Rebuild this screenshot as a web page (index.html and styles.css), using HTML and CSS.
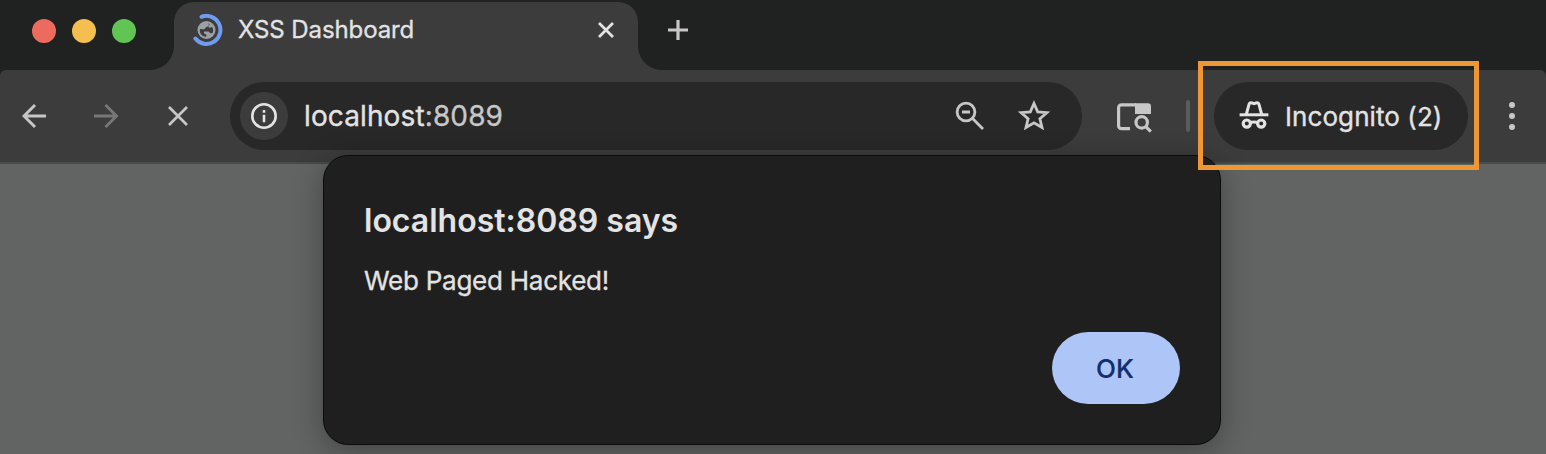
FILE: index.html
```html
<!DOCTYPE html>
<html lang="en">
<head>
<meta charset="utf-8">
<title>XSS Dashboard</title>
<link rel="stylesheet" href="styles.css">
</head>
<body>
<div class="window">
  <header class="tabstrip">
    <div class="lights"><i class="light red"></i><i class="light yellow"></i><i class="light green"></i></div>
    <div class="tab">
      <svg class="favicon" width="32" height="32" viewBox="0 0 32 32" fill="none">
        <path d="M10.5 2.8A14 14 0 1 1 4.4 24.5" stroke="#6f9cf0" stroke-width="4" stroke-linecap="round"/>
        <circle cx="15.5" cy="16" r="9" fill="#9aa0a3"/>
        <path d="M17 9.3c1.7 1.6.8 3.4-1.5 3.7-1.4.2-1 2.2-2.8 2.2L8.9 15c-.6 5 2.6 8 6.5 7.6l-.1-2.1c-2.2-.4-2.8-1.4-2.3-3h4c1.2 0 1.5 1.7 2.6 1.8l2-.3c.9-2.2.7-4.4-.5-6.3-1.3 1.5-3 1.5-3.5.2-.3-1.4 1.6-1.8.9-2.9z" fill="#3c3c3c"/>
      </svg>
      <span class="tab-title">XSS Dashboard</span>
      <svg class="tab-close" width="18" height="18" viewBox="0 0 18 18" fill="none" stroke="#e3e3e3" stroke-width="2.8"><path d="M2 2l14 14M16 2L2 16"/></svg>
    </div>
    <svg class="new-tab" width="20" height="20" viewBox="0 0 20 20" fill="none" stroke="#c7c7c7" stroke-width="3.2"><path d="M10 0v20M0 10h20"/></svg>
  </header>
  <nav class="toolbar">
    <svg class="back" width="26" height="26" viewBox="0 0 26 26" fill="none" stroke="#c7c7c7" stroke-width="2.9"><path d="M24 13H2.5M13 2L2 13l11 11"/></svg>
    <svg class="forward" width="26" height="26" viewBox="0 0 26 26" fill="none" stroke="#777" stroke-width="2.9"><path d="M1 13h22M12.5 2l11 11-11 11"/></svg>
    <svg class="stop" width="22" height="22" viewBox="0 0 22 22" fill="none" stroke="#c7c7c7" stroke-width="2.7"><path d="M2 2l18 18M20 2L2 20"/></svg>
    <div class="omnibox">
      <span class="site-info">
        <svg width="26" height="26" viewBox="0 0 26 26" fill="none" stroke="#e3e3e3" stroke-width="2.6"><circle cx="13" cy="13" r="11.7"/><path d="M13 11.8v7.4M13 7v2.7"/></svg>
      </span>
      <span class="url">localhost<span class="port">:8089</span></span>
      <svg class="zoom-out" width="30" height="30" viewBox="0 0 30 30" fill="none" stroke="#c7c7c7" stroke-width="2.8"><circle cx="11" cy="11" r="8.9"/><path d="M7 11h8M17.3 17.3L28 28"/></svg>
      <svg class="star" width="32" height="30" viewBox="0 0 32 30" fill="none" stroke="#c7c7c7" stroke-width="2.8"><path d="M16 3.5l3.7 8.4 9.1.8-6.9 6 2.1 8.8-8-4.7-8 4.7 2.1-8.8-6.9-6 9.1-.8z"/></svg>
    </div>
    <svg class="side-search" width="36" height="32" viewBox="0 0 36 32" fill="none" stroke="#c7c7c7" stroke-width="3.2"><path d="M14 26.6H5.4A2.8 2.8 0 0 1 2.6 23.8V5.6A2.8 2.8 0 0 1 5.4 2.8H20"/><path d="M19 1.2h13a3 3 0 0 1 3 3V12H19z" fill="#c7c7c7" stroke="none"/><circle cx="25.7" cy="20.4" r="5.7"/><path d="M29.8 24.6l5 5"/></svg>
    <i class="divider"></i>
    <div class="incognito">
      <svg class="spy" width="30" height="28" viewBox="0 0 30 28" fill="none" stroke="#e3e3e3"><path d="M.6 13.8h28.8" stroke-width="3"/><path d="M7.3 13.5L9.9 3.8c.4-1.6 1.2-2.4 2.4-2l2.7.8 2.7-.8c1.2-.4 2 .4 2.4 2L22.7 13.5" stroke-width="3"/><circle cx="7.8" cy="22.6" r="3.6" stroke-width="3.2"/><circle cx="22.2" cy="22.6" r="3.6" stroke-width="3.2"/><path d="M11 21.8c2-1.1 6-1.1 8 0" stroke-width="2.8"/></svg>
      <span class="incognito-label">Incognito (2)</span>
    </div>
    <div class="menu"><i></i><i></i><i></i></div>
  </nav>
  <main class="page"></main>
  <section class="dialog">
    <h1 class="dialog-title">localhost:8089 says</h1>
    <p class="dialog-message">Web Paged Hacked!</p>
    <button class="ok">OK</button>
  </section>
  <div class="highlight"></div>
</div>
</body>
</html>
```

FILE: styles.css
```css
* { box-sizing: border-box; }
body { margin: 0; background: #202221; font-family: Inter, "Liberation Sans", sans-serif; color: #e3e3e3; }
svg { display: block; flex: none; }
.window { position: relative; width: 1546px; height: 454px; overflow: hidden; display: flex; flex-direction: column; }

.tabstrip { height: 70px; flex: none; display: flex; align-items: flex-end; background: #202221; }
.lights { width: 174px; height: 70px; display: flex; gap: 16px; padding: 19px 0 0 32px; }
.light { width: 24px; height: 24px; border-radius: 50%; }
.red { background: #ed6a5f; }
.yellow { background: #f5bf4f; }
.green { background: #61c554; }
.tab { position: relative; width: 464px; height: 68px; padding: 0 23px 12px 17px; display: flex; align-items: center; background: #3c3c3c; border-radius: 20px 20px 0 0; }
.tab::before, .tab::after { content: ""; position: absolute; bottom: 0; width: 24px; height: 24px; }
.tab::before { left: -24px; background: radial-gradient(circle at 0 0, transparent 23.5px, #3c3c3c 24.5px); }
.tab::after { right: -24px; background: radial-gradient(circle at 100% 0, transparent 23.5px, #3c3c3c 24.5px); }
.tab-title { margin-left: 15px; font-size: 24px; line-height: 32px; letter-spacing: -.1px; -webkit-text-stroke: .3px; white-space: nowrap; }
.tab-close { margin-left: auto; }
.new-tab { margin: 0 0 30px 30px; }

.toolbar { height: 94px; flex: none; display: flex; align-items: center; padding-left: 22px; background: #3c3c3c; border-bottom: 2px solid #484949; border-radius: 6px 6px 0 0; }
.forward { margin-left: 45px; }
.stop { margin-left: 48px; }
.omnibox { width: 852px; height: 68px; margin-left: 41px; padding: 0 32px 0 10px; border-radius: 34px; background: #282828; display: flex; align-items: center; }
.site-info { width: 48px; height: 48px; border-radius: 50%; background: #3c3c3c; display: flex; align-items: center; justify-content: center; }
.url { margin-left: 16px; font-size: 28px; line-height: 36px; letter-spacing: .12px; -webkit-text-stroke: .35px; white-space: nowrap; }
.port { color: #c7c7c7; }
.zoom-out { margin-left: auto; }
.star { margin: 0 0 2px 33px; }
.side-search { margin: 3px 0 0 34px; }
.divider { width: 4px; height: 32px; margin-left: 34px; border-radius: 2px; background: #5c5c5c; }
.incognito { width: 254px; height: 68px; margin-left: 24px; padding-left: 25px; border-radius: 34px; background: #282828; display: flex; align-items: center; }
.spy { margin-bottom: 2px; }
.incognito-label { margin: 2px 0 0 16px; font-size: 26px; line-height: 34px; letter-spacing: .08px; -webkit-text-stroke: .35px; white-space: nowrap; }
.menu { margin-left: 41px; display: flex; flex-direction: column; gap: 5px; }
.menu i { width: 6px; height: 6px; border-radius: 50%; background: #c7c7c7; }

.page { flex: 1; background: #626463; }
.dialog { position: absolute; left: 323px; top: 155px; width: 898px; height: 290px; padding: 45px 40px 40px 40px; border: 1px solid #0b0b0b; border-radius: 25px; background: #1f1f1f; box-shadow: 0 6px 30px rgba(0, 0, 0, .32); display: flex; flex-direction: column; }
.dialog-title { margin: 0; font-size: 32px; line-height: 40px; font-weight: 600; white-space: nowrap; align-self: flex-start; }
.dialog-message { margin: 22px 0 0; font-size: 26px; line-height: 36px; letter-spacing: -.25px; -webkit-text-stroke: .3px; white-space: nowrap; align-self: flex-start; }
.ok { width: 128px; height: 72px; margin-top: auto; align-self: flex-end; padding: 2px 2px 0 0; border: 0; border-radius: 36px; background: #adc5f7; color: #122e6e; font: 500 26px/34px Inter, "Liberation Sans", sans-serif; -webkit-text-stroke: .2px; }
.highlight { position: absolute; left: 1198px; top: 61px; width: 281px; height: 109px; border: 5px solid #ef9635; }
```
